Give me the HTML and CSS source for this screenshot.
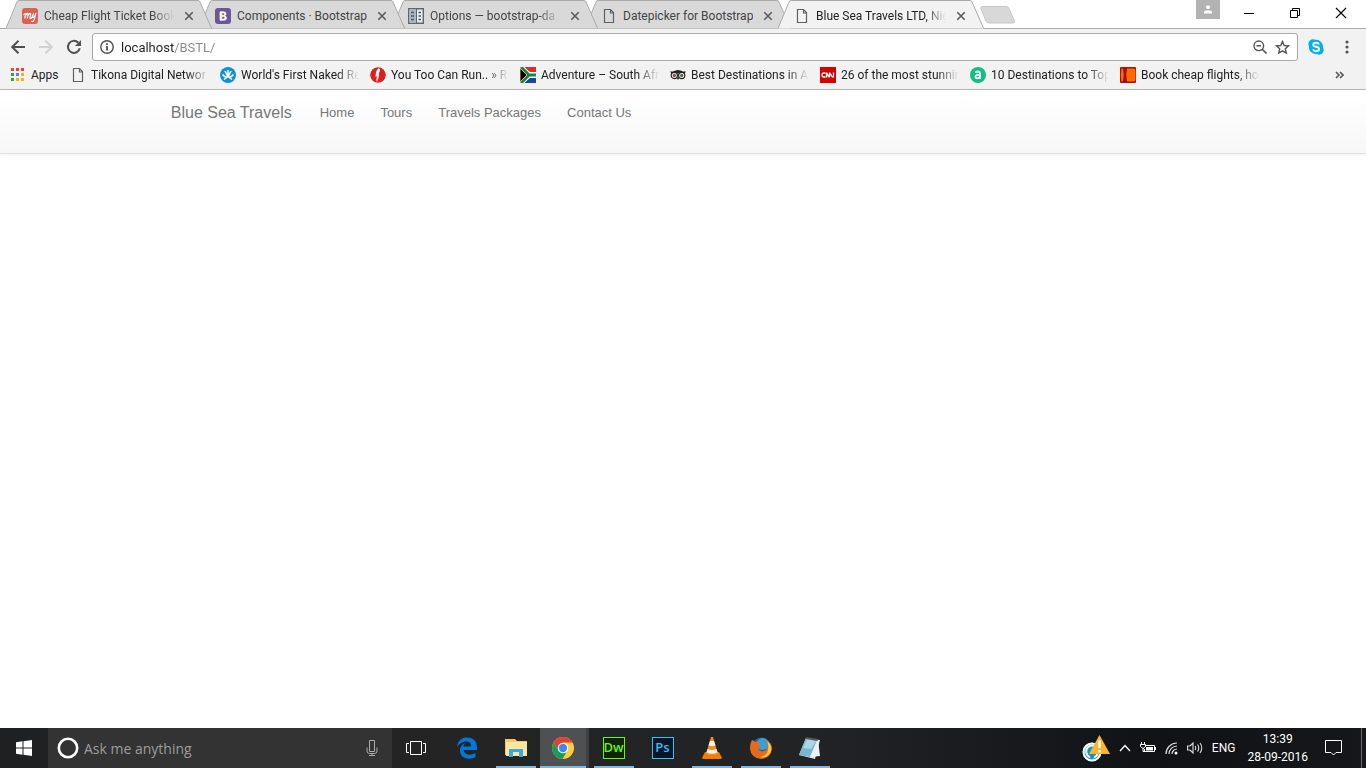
FILE: index.html
```html
<!DOCTYPE html>
<html lang="en">
<head>
<meta charset="utf-8">
<title>Blue Sea Travels LTD, Nigeria</title>
<link rel="stylesheet" href="styles.css">
</head>
<body>
<svg class="defs" aria-hidden="true">
  <symbol id="tab-shape" viewBox="0 0 206 29" preserveAspectRatio="none"><path d="M0 28.500 11 2Q11.500.5 13 .5H192Q193.500.5 194 2L205 27 206 28.500"/></symbol>
  <symbol id="close-x" viewBox="0 0 10 10"><path d="M1.300 1.300 8.700 8.700M8.700 1.300 1.300 8.700" stroke="#5a5a5a" stroke-width="1.600" fill="none"/></symbol>
  <symbol id="doc" viewBox="0 0 16 16"><path d="M3.500 1.500H9.500L12.500 4.500V14.500H3.500ZM9.500 1.500V5H12.500" fill="none" stroke="#606060" stroke-width="1.200"/></symbol>
</svg>

<header class="browser">
  <div class="tabstrip">
    <div class="tabs">
      <div class="tab">
        <svg class="tab-bg"><use href="#tab-shape"/></svg>
        <svg class="icon" viewBox="0 0 16 16"><rect width="16" height="16" rx="3" fill="#dd6153"/><path d="M1.500 7C3 5 4 5 3.500 7L2.800 10.500M3.500 7.500C5 4.500 6.500 5 6 7L5.300 10.500M6 7.500C8 4.500 9 5 8.600 7L8 10Q9 11 10.500 8.500L11.500 5.500Q10 9.500 11.500 9.500 13 9 14 5L12 12Q11 14.500 9.500 13" fill="none" stroke="#fff" stroke-width="1.200"/></svg>
        <a class="tab-title" href="#">Cheap Flight Ticket Book</a>
        <button class="tab-close" aria-label="Close tab"><svg width="10" height="10"><use href="#close-x"/></svg></button>
      </div>
      <div class="tab">
        <svg class="tab-bg"><use href="#tab-shape"/></svg>
        <svg class="icon" viewBox="0 0 16 16"><rect width="16" height="16" rx="3" fill="#6b5797"/><path d="M5 3.800H8.500Q11 3.800 11 5.800 11 7.300 9.500 7.700 11.500 8.200 11.500 10 11.500 12.300 8.500 12.300H5ZM6.500 5V7.300H8.500Q9.500 7.200 9.500 6.100 9.500 5 8.500 5ZM6.500 8.500V11H8.500Q9.900 11 9.900 9.700 9.900 8.500 8.500 8.500Z" fill="#fff" stroke="#fff" stroke-width=".7" fill-rule="evenodd"/></svg>
        <a class="tab-title" href="#">Components · Bootstrap</a>
        <button class="tab-close" aria-label="Close tab"><svg width="10" height="10"><use href="#close-x"/></svg></button>
      </div>
      <div class="tab">
        <svg class="tab-bg"><use href="#tab-shape"/></svg>
        <svg class="icon" viewBox="0 0 16 16"><path d="M.7.700H15.300V15.300H.7Z" fill="#e9edf0" stroke="#5c666c" stroke-width="1.400"/><path d="M1.400 1.400H8V14.600H1.400Z" fill="#a9b7c0"/><path d="M8.500 1V15" stroke="#5c666c"/><path d="M3 4.500H6M3 8H6M3 11.500H6M10.500 4.500H13M10.500 8H13M10.500 11.500H13" stroke="#4c575e" stroke-width="1.500"/></svg>
        <a class="tab-title" href="#">Options — bootstrap-da</a>
        <button class="tab-close" aria-label="Close tab"><svg width="10" height="10"><use href="#close-x"/></svg></button>
      </div>
      <div class="tab">
        <svg class="tab-bg"><use href="#tab-shape"/></svg>
        <svg class="icon"><use href="#doc"/></svg>
        <a class="tab-title" href="#">Datepicker for Bootstrap</a>
        <button class="tab-close" aria-label="Close tab"><svg width="10" height="10"><use href="#close-x"/></svg></button>
      </div>
      <div class="tab active">
        <svg class="tab-bg"><use href="#tab-shape"/></svg>
        <svg class="icon"><use href="#doc"/></svg>
        <a class="tab-title" href="#">Blue Sea Travels LTD, Nig</a>
        <button class="tab-close" aria-label="Close tab"><svg width="10" height="10"><use href="#close-x"/></svg></button>
      </div>
    </div>
    <button class="new-tab" aria-label="New tab"><svg width="36" height="18" viewBox="0 0 36 18"><path d="M3 .5H26Q28 .5 29 2.500L34 14Q35 17 33 17H9Q7 17 6 15L1 3Q0 .5 3 .5Z" fill="#d8d8d8" stroke="#c6c6c6"/></svg></button>
    <div class="window-controls">
      <button class="profile" aria-label="Profile"><svg width="10" height="9" viewBox="0 0 10 9"><circle cx="5" cy="2.200" r="2" fill="#fff"/><path d="M1 8.500V7Q1.500 5.300 5 5.300T9 7V8.500Z" fill="#fff"/></svg></button>
      <button class="win" aria-label="Minimize"><svg width="12" height="12"><path d="M1 6.500H11" stroke="#000"/></svg></button>
      <button class="win" aria-label="Restore"><svg width="12" height="12"><path d="M1.500 3.500H8.500V10.500H1.500ZM3.500 3V1.500H10.500V8.500H9" fill="none" stroke="#000"/></svg></button>
      <button class="win" aria-label="Close"><svg width="12" height="12"><path d="M1 1 11 11M11 1 1 11" stroke="#000" stroke-width="1.100"/></svg></button>
    </div>
  </div>

  <div class="toolbar">
    <button class="tool" aria-label="Back"><svg width="16" height="16" viewBox="0 0 16 16"><path d="M15 8H2.500M8.500 1.800 2.200 8 8.500 14.200" fill="none" stroke="#505050" stroke-width="2"/></svg></button>
    <button class="tool" aria-label="Forward"><svg width="16" height="16" viewBox="0 0 16 16"><path d="M1 8H13.500M7.500 1.800 13.800 8 7.500 14.200" fill="none" stroke="#d2d2d2" stroke-width="2"/></svg></button>
    <button class="tool" aria-label="Reload"><svg width="16" height="16" viewBox="0 0 16 16"><path d="M13.800 9.300A6 6 0 1 1 12.300 3.700" fill="none" stroke="#505050" stroke-width="2"/><path d="M15 1V7H9Z" fill="#505050"/></svg></button>
    <div class="omnibox">
      <svg width="14" height="14" viewBox="0 0 14 14"><circle cx="7" cy="7" r="6.200" fill="none" stroke="#505050" stroke-width="1.400"/><path d="M7 6V10.500M7 3.300V5" stroke="#505050" stroke-width="1.800"/></svg>
      <input class="url" type="text" aria-label="Address" value="localhost/BSTL/">
      <button aria-label="Zoom"><svg width="14" height="14" viewBox="0 0 14 14"><circle cx="5.800" cy="5.800" r="4.800" fill="none" stroke="#555" stroke-width="1.400"/><path d="M3.500 5.800H8M9.200 9.200 13.500 13.500" stroke="#555" stroke-width="1.600"/></svg></button>
      <button aria-label="Bookmark this page"><svg width="15" height="15" viewBox="0 0 15 15"><path d="M7.500 1.500 9.200 5.500 13.600 5.900 10.300 8.800 11.300 13.100 7.500 10.800 3.700 13.100 4.700 8.800 1.400 5.900 5.800 5.500Z" fill="none" stroke="#555" stroke-width="1.400"/></svg></button>
    </div>
    <button class="ext" aria-label="Skype"><svg width="16" height="16" viewBox="0 0 16 16"><circle cx="5" cy="5" r="4.700" fill="#00aff0"/><circle cx="11" cy="11" r="4.700" fill="#00aff0"/><circle cx="8" cy="8" r="7.200" fill="#00aff0"/><path d="M11 5.500Q10.300 3.800 8 3.800 5.300 3.800 5.300 5.700 5.300 7.300 8 7.800 11 8.300 11 10 11 12.200 8 12.200 5.600 12.200 5 10.300" fill="none" stroke="#fff" stroke-width="1.900"/></svg></button>
    <button class="menu" aria-label="Menu"><svg width="4" height="14" viewBox="0 0 4 14"><circle cx="2" cy="2" r="1.600" fill="#555"/><circle cx="2" cy="7" r="1.600" fill="#555"/><circle cx="2" cy="12" r="1.600" fill="#555"/></svg></button>
  </div>

  <nav class="bookmarks" aria-label="Bookmarks">
    <a class="apps" href="#"><svg width="14" height="14" viewBox="0 0 14 14"><path d="M0 0H3V3H0ZM5 0H8V3H5ZM10 0H13V3H10Z" fill="#ea4335"/><path d="M0 5H3V8H0ZM0 10H3V13H0Z" fill="#34a04f"/><path d="M5 5H8V8H5Z" fill="#4285f4"/><path d="M10 5H13V8H10ZM5 10H8V13H5ZM10 10H13V13H10Z" fill="#f4b400"/></svg><span>Apps</span></a>
    <a class="mark" href="#"><svg class="icon"><use href="#doc"/></svg><span>Tikona Digital Networ</span></a>
    <a class="mark" href="#"><svg class="icon" viewBox="0 0 16 16"><circle cx="8" cy="8" r="8" fill="#1290d6"/><path d="M8 3V9M5 4 7.500 9M11 4 8.500 9M2.500 7.500Q5 11 8 9.500M13.500 7.500Q11 11 8 9.500M4 12.500 8 9.500 12 12.500" fill="none" stroke="#fff" stroke-width="1.500"/></svg><span>World's First Naked Re</span></a>
    <a class="mark" href="#"><svg class="icon" viewBox="0 0 16 16"><path d="M0 0H16V16H0Z" fill="#fff"/><circle cx="8" cy="8" r="7.800" fill="#dc1f1f"/><path d="M8 1.500Q10.500 1 10 3.500L9 6 8.700 10 7 15 6.300 13 7 9 5.500 10 6 5Z" fill="#fff"/></svg><span>You Too Can Run.. » R</span></a>
    <a class="mark" href="#"><svg class="icon" viewBox="0 0 16 16"><path d="M0 0H16V16H0Z" fill="#fff"/><path d="M3 0H16V5H10Z" fill="#df2c25"/><path d="M3 16H16V11H10Z" fill="#15479c"/><path d="M1 0 9 8H16M1 16 9 8" fill="none" stroke="#fff" stroke-width="5"/><path d="M1 0 9 8H16M1 16 9 8" fill="none" stroke="#148456" stroke-width="3"/><path d="M0 1 7 8 0 15Z" fill="#000" stroke="#f1ba29"/></svg><span>Adventure – South Afr</span></a>
    <a class="mark" href="#"><svg class="icon" viewBox="0 0 16 16"><path d="M0 4.500H3Q8 1.500 13 4.500H16L14.500 6.500 11 5 8 6.500 5 5 1.500 6.500Z" fill="#222"/><circle cx="4.300" cy="8.500" r="3.100" fill="#fff" stroke="#222" stroke-width="1.200"/><circle cx="11.700" cy="8.500" r="3.100" fill="#fff" stroke="#222" stroke-width="1.200"/><circle cx="4.300" cy="8.500" r="1.300" fill="#a83a32" stroke="#222" stroke-width=".5"/><circle cx="11.700" cy="8.500" r="1.300" fill="#397a44" stroke="#222" stroke-width=".5"/><path d="M6.500 10.500H9.500L8 13Z" fill="#222"/></svg><span>Best Destinations in A</span></a>
    <a class="mark" href="#"><svg class="icon" viewBox="0 0 16 16"><path d="M0 0H16V16H0Z" fill="#d60000"/><path d="M5.500 6H4Q2 6 2 8T4 10H5.500M6.500 10.500V6.500Q6.500 5.500 7.500 7L8.500 9.500Q9.500 10.500 9.500 9V6.500Q9.500 5.500 10.500 7L12 9.500Q13.500 11 13.500 9V5.500" fill="none" stroke="#fff" stroke-width="1.300"/></svg><span>26 of the most stunnin</span></a>
    <a class="mark" href="#"><svg class="icon" viewBox="0 0 16 16"><circle cx="8" cy="8" r="8" fill="#11bf85"/><path d="M5.500 5.800Q6 4.500 8 4.500 10 4.500 10 6.500V12M10 8Q5.500 7.500 5.500 9.800 5.500 11.300 7.300 11.300 9.500 11.300 10 9.500" fill="none" stroke="#fff" stroke-width="1.800"/></svg><span>10 Destinations to Top</span></a>
    <a class="mark" href="#"><svg class="icon" viewBox="0 0 16 16"><rect width="16" height="16" rx="1" fill="#a60f0d"/><path d="M1.500 1.500H3Q4.500 8 3 14.500H1.500Q0 8 1.500 1.500ZM7 1.500H14Q15.500 1.500 15.500 4V12Q15.500 14.500 14 14.500H7Q5.500 8 7 1.500Z" fill="#ff6a08"/></svg><span>Book cheap flights, ho</span></a>
    <button class="more" aria-label="More bookmarks"><svg width="9" height="8" viewBox="0 0 9 8"><path d="M1 1 4 4 1 7M5 1 8 4 5 7" fill="none" stroke="#555" stroke-width="1.600"/></svg></button>
  </nav>
</header>

<main class="page">
  <nav class="navbar" aria-label="Main">
    <div class="container">
      <a class="brand" href="#">Blue Sea Travels</a>
      <a href="#">Home</a>
      <a href="#">Tours</a>
      <a href="#">Travels Packages</a>
      <a href="#">Contact Us</a>
    </div>
  </nav>
</main>

<footer class="taskbar">
  <button class="start" aria-label="Start"><svg width="16" height="16" viewBox="0 0 16 16"><path d="M0 2.300 6.500 1.300V7.500H0ZM7.500 1.200 16 0V7.500H7.500ZM0 8.500H6.500V14.700L0 13.700ZM7.500 8.500H16V16L7.500 14.800Z" fill="#fff"/></svg></button>
  <div class="search">
    <svg width="22" height="22" viewBox="0 0 22 22"><circle cx="11" cy="11" r="9.200" fill="none" stroke="#fff" stroke-width="2.600"/></svg>
    <input type="text" aria-label="Search" placeholder="Ask me anything">
    <button aria-label="Voice search"><svg width="12" height="16" viewBox="0 0 12 16"><path d="M3.500.5H8.500V11.500H3.500ZM1 7.500V11Q1 13.500 3.500 13.500H8.500Q11 13.500 11 11V7.500M6 13.500V15.500M3 15.500H9" fill="none" stroke="#aaa"/></svg></button>
  </div>
  <div class="apps-row">
    <button class="task view" aria-label="Task view"><svg width="20" height="14" viewBox="0 0 20 14"><path d="M4.500.5H15.500V13.500H4.500ZM3 2.500H.5V11.500H3M17 2.500H19.500V11.500H17" fill="none" stroke="#fff"/></svg></button>
    <button class="task" aria-label="Edge"><svg width="22" height="22" viewBox="0 0 22 22"><path d="M1 10C2 3 6 .5 11 .5 18 .5 21 5.500 21 10V13H7.500C8 18 14 19 19.500 16V20C13 23.500 4 21.500 4 13.500 4 9.500 6.500 7 9.500 6 8 7.500 7.500 8 7.500 9.500H15C15 6 13.500 4.500 10.500 4.500 6 4.500 3 7 1 10Z" fill="#0078d7"/></svg></button>
    <button class="task open" aria-label="File Explorer"><svg width="22" height="20" viewBox="0 0 22 20"><path d="M0 1H10L12 3H22V17H0Z" fill="#f3c869"/><path d="M1 4H22V18H1Z" fill="#fde6a0"/><path d="M4 19V11H18V19H14V14H8V19Z" fill="#39a9e0"/></svg></button>
    <button class="task open current" aria-label="Chrome"><svg width="22" height="22" viewBox="0 0 22 22"><circle cx="11" cy="11" r="11" fill="#ffcd40"/><path d="M11 0A11 11 0 0 1 20.500 5.500H11L6 13 1.500 5.500A11 11 0 0 1 11 0Z" fill="#e44134"/><path d="M1.500 5.500 6.500 13.500 11 16H14L10.500 22A11 11 0 0 1 1.500 5.500Z" fill="#169b59"/><circle cx="11" cy="11" r="5.200" fill="#fff"/><circle cx="11" cy="11" r="4.200" fill="#4285f4"/></svg></button>
    <button class="task open" aria-label="Dreamweaver"><span class="adobe dw">Dw</span></button>
    <button class="task" aria-label="Photoshop"><span class="adobe ps">Ps</span></button>
    <button class="task open" aria-label="VLC"><svg width="20" height="22" viewBox="0 0 20 22"><path d="M3 15H17L20 21Q20 22 18 22H2Q0 22 0 21Z" fill="#f27c00"/><path d="M9 0H11L16 17Q10 20 4 17Z" fill="#f78b17"/><path d="M8 4H12L13.500 8.500Q10 10 6.500 8.500ZM5.500 12Q10 14 14.500 12L15.500 15.500Q10 18 4.500 15.500Z" fill="#f7f2eb"/></svg></button>
    <button class="task open" aria-label="Firefox"><svg width="22" height="22" viewBox="0 0 22 22"><circle cx="11.500" cy="10.500" r="10" fill="#1c61a5"/><circle cx="12.500" cy="7" r="6" fill="#38a1d3"/><path d="M2 3Q4 3.500 5 5 7 4 9.500 5L8.500 7.500 11 9 8 11Q9 14 12 14.500 16 14 17 11 18.500 8 16 3 22 6 22 12 21 21 11 22 1 21 0 12 0 6 2 3Z" fill="#e76919"/><path d="M17 4Q23 9 20.500 15 17 22 10 20 17 19 18 13 19 8 17 4Z" fill="#ffcb3c"/></svg></button>
    <button class="task open" aria-label="Notepad"><svg width="22" height="22" viewBox="0 0 22 22"><path d="M7 1 21 3 16 22 0 18Z" fill="#d7e5ec"/><path d="M7 1 18 3 11 20 0 18Z" fill="#78b7cf"/><path d="M8 2 17 4 12 12 4 11Z" fill="#a9d5e5"/><path d="M7 1 19 3" stroke="#555" stroke-width="2"/><path d="M19 3 21 19 11 20Z" fill="#edf3f5"/></svg></button>
  </div>
  <div class="tray">
    <button aria-label="Updates"><svg width="28" height="27" viewBox="0 0 28 27"><circle cx="10" cy="17" r="9.500" fill="#1593c7"/><circle cx="10" cy="17" r="8.500" fill="none" stroke="#fff" stroke-width="2"/><path d="M15 13A6 6 0 1 0 16 18" fill="none" stroke="#fff" stroke-width="2"/><circle cx="10" cy="22" r="2" fill="#1593c7"/><path d="M17.500 0 28 19H7Z" fill="#fbb62d"/><path d="M17.500 5.500V13M17.500 15V17.500" stroke="#fff" stroke-width="2.500"/></svg></button>
    <button aria-label="Show hidden icons"><svg width="12" height="8" viewBox="0 0 12 8"><path d="M1 7 6 1.500 11 7" fill="none" stroke="#fff" stroke-width="1.300"/></svg></button>
    <button aria-label="Battery"><svg width="16" height="12" viewBox="0 0 16 12"><path d="M5.500 3.500H14.500V9.500H4.500V7" fill="none" stroke="#fff"/><path d="M6 5H13V8.500H6ZM15 5H16V8H15Z" fill="#fff"/><path d="M1.500 0V2.500M4.500 0V2.500M.5 2.500H5.500V4.500L3 6.500.5 4.500ZM3 6V9.500H5" fill="none" stroke="#fff"/></svg></button>
    <button aria-label="Wi-Fi"><svg width="13" height="13" viewBox="0 0 13 13"><path d="M1 12A11 11 0 0 1 12 1M4 12A8 8 0 0 1 12 4M7 12A5 5 0 0 1 12 7" fill="none" stroke="#ddd" stroke-width="1.200"/><circle cx="11" cy="11" r="1.500" fill="#fff"/></svg></button>
    <button aria-label="Volume"><svg width="16" height="12" viewBox="0 0 16 12"><path d="M.5 4H3L6 1V11L3 8H.5ZM8 4Q9.500 6 8 8M10.500 2.500Q13 6 10.500 9.500M13 1Q16.500 6 13 11" fill="none" stroke="#ddd" stroke-width="1.100"/></svg></button>
    <button class="lang">ENG</button>
    <button class="clock"><span>13:39</span><span>28-09-2016</span></button>
    <button class="notes" aria-label="Notifications"><svg width="17" height="16" viewBox="0 0 17 16"><path d="M.5.5H16.500V12.500H11L8.500 15 6 12.500H.5Z" fill="none" stroke="#fff"/></svg></button>
    <button class="desktop" aria-label="Show desktop"></button>
  </div>
</footer>
</body>
</html>
```

FILE: styles.css
```css
* { box-sizing: border-box; }

body {
  margin: 0;
  min-height: 100vh;
  display: flex;
  flex-direction: column;
  background: #fff;
  color: #222;
  font: 12px/16px Roboto, "Open Sans", sans-serif;
}

a { color: inherit; text-decoration: none; }

button {
  display: flex;
  align-items: center;
  justify-content: center;
  margin: 0;
  padding: 0;
  border: 0;
  background: none;
  color: inherit;
  font: inherit;
}

input {
  min-width: 0;
  padding: 0;
  border: 0;
  outline: 0;
  background: none;
  font: inherit;
}

svg { display: block; flex: none; }
.defs { position: absolute; width: 0; height: 0; }
.icon { width: 16px; height: 16px; }

/* Tabs */
.tabstrip {
  display: flex;
  height: 29px;
  padding-left: 6px;
  background: linear-gradient(#ababab, #ababab) bottom / 100% 1px no-repeat #fff;
}

.tabs { display: flex; isolation: isolate; }

.tab {
  position: relative;
  isolation: isolate;
  display: flex;
  align-items: center;
  width: 206px;
  height: 29px;
  padding: 2px 18px 0 16px;
  color: #444;
}

/* Each tab covers the left slope of the next one; the active tab covers both. */
.tab:nth-child(1) { z-index: 4; }
.tab:nth-child(2) { z-index: 3; }
.tab:nth-child(3) { z-index: 2; }
.tab:nth-child(4) { z-index: 1; }
.tab.active { z-index: 5; color: #222; }
.tab + .tab { margin-left: -13px; }

.tab-bg {
  position: absolute;
  z-index: -1;
  inset: 0;
  width: 100%;
  height: 100%;
  fill: #d9d9d9;
  stroke: #ababab;
}

.tab:not(.active) { background: linear-gradient(#ababab, #ababab) bottom / 100% 1px no-repeat; }
.active .tab-bg { fill: #f2f2f2; }

.tab-title {
  flex: 1;
  margin-left: 6px;
  overflow: hidden;
  white-space: nowrap;
}

.tab-title, .mark span {
  mask-image: linear-gradient(to left, transparent, #000 22px);
}

.tab:nth-child(2) .tab-title, .tab:nth-child(4) .tab-title { mask-image: none; }
.tab-close { width: 10px; margin-left: 10px; }
.new-tab { align-self: center; margin-left: -4px; }
.window-controls { display: flex; align-items: flex-start; margin-left: auto; padding-right: 2px; }
.profile { width: 24px; height: 19px; margin-right: 6px; background: #b3b3b3; }
.win { width: 46px; height: 26px; }

/* Address bar */
.toolbar {
  display: flex;
  align-items: center;
  height: 33px;
  padding: 3px 6px 0 4px;
  background: #f2f2f2;
}

.tool { width: 28px; height: 28px; }

.omnibox {
  flex: 1;
  display: flex;
  align-items: center;
  gap: 8px;
  height: 28px;
  margin-left: 4px;
  padding: 0 7px;
  border: 1px solid #a9a9a9;
  border-radius: 3px;
  background: #fff;
}

.url {
  flex: 1;
  height: 20px;
  margin-left: -1px;
  font-size: 13px;
  color: transparent;
  background: linear-gradient(to right, #222 53px, #888 53px);
  background-clip: text;
}

.ext { width: 36px; }
.menu { width: 26px; }

/* Bookmarks */
.bookmarks {
  display: flex;
  align-items: center;
  height: 28px;
  padding: 0 22px 2px 11px;
  border-bottom: 1px solid #b5b5b5;
  background: #f2f2f2;
}

.apps { display: flex; align-items: center; gap: 6px; width: 59px; }
.mark { display: flex; align-items: center; gap: 5px; width: 150px; }
.mark span { width: 118px; overflow: hidden; white-space: nowrap; }
.more { width: 10px; margin-left: auto; }

/* Site */
.page { flex: 1; }

.navbar {
  height: 64px;
  border-bottom: 1px solid #e0e0e0;
  background: linear-gradient(#fff, #f7f7f7);
  box-shadow: 0 1px 2px rgba(0, 0, 0, .06);
  font-family: "Liberation Sans", Arial, sans-serif;
}

.container {
  display: flex;
  align-items: center;
  gap: 26px;
  width: 75%;
  margin: 0 auto;
  padding-top: 13px;
  color: #777;
  font-size: 13px;
  line-height: 20px;
}

.brand { margin-right: 2px; font-size: 16px; }

/* Taskbar */
.taskbar {
  display: flex;
  height: 40px;
  background: linear-gradient(to right, #1e2022, #242424 30%, #222325 60%, #101216 85%, #15171b);
  color: #fff;
}

.start { width: 48px; }

.search {
  display: flex;
  align-items: center;
  gap: 5px;
  width: 344px;
  padding: 0 14px 0 9px;
  background: #333;
}

.search input { flex: 1; color: #fff; font: 14px "Open Sans", sans-serif; }
.search input::placeholder { color: #9c9c9c; opacity: 1; }
.apps-row { display: flex; }
.task { width: 49px; padding: 0 4px; }
.task.view { width: 50px; padding-right: 6px; }
.task.open { background: linear-gradient(#76b9ed, #76b9ed) bottom / 40px 2px no-repeat; }

.task.current {
  border-right: 3px solid #3e3f40;
  background: linear-gradient(#76b9ed, #76b9ed) bottom / 100% 2px no-repeat #4f5051;
}

.adobe {
  width: 22px;
  height: 22px;
  border: 1px solid;
  font: 600 13px/18px "Open Sans", sans-serif;
  text-align: center;
}

.dw { color: #6bf60d; background: #102402; }
.ps { color: #3dbcf6; background: #061827; }

.tray {
  display: flex;
  gap: 9px;
  margin-left: auto;
  font: 12px/18px Roboto, "Open Sans", sans-serif;
}

.clock { flex-direction: column; margin: 0 8px 0 3px; }
.notes { margin-right: 10px; }
.desktop { width: 5px; border-left: 1px solid #6a6b6d; }
```
